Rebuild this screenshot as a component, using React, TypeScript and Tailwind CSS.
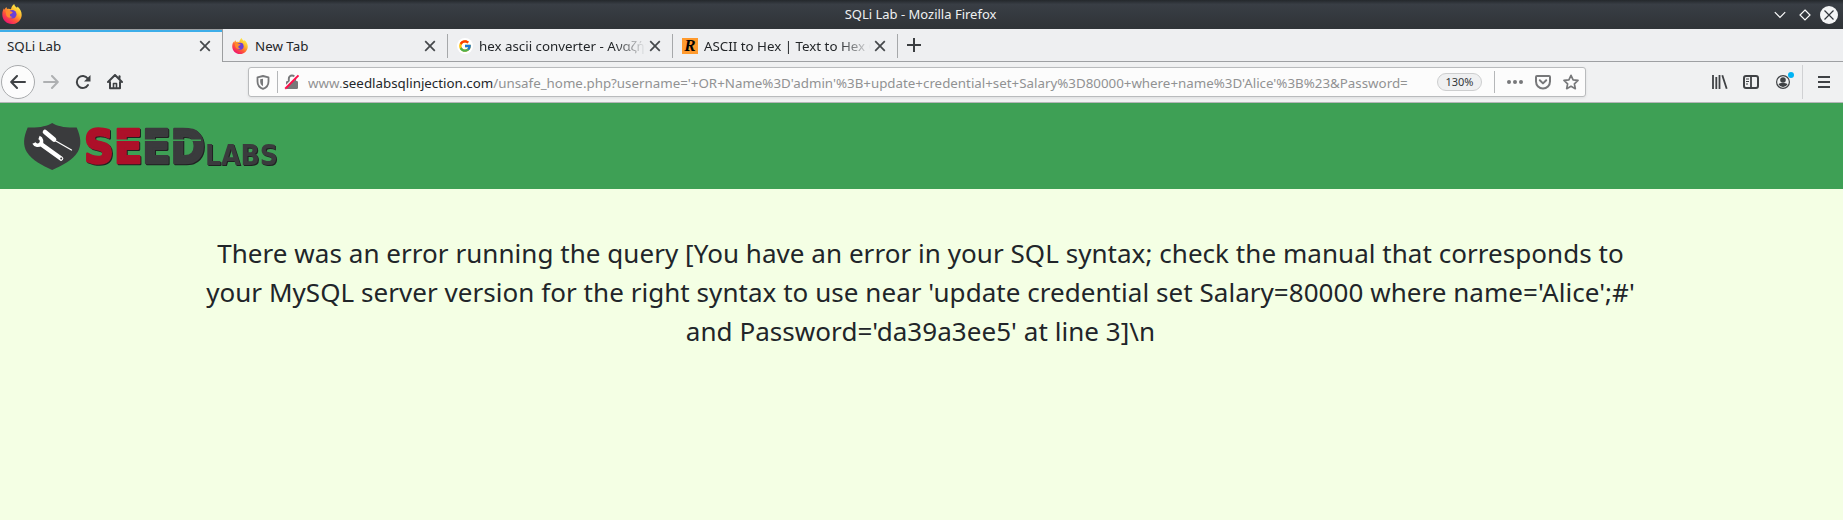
import React from "react";
import { FcGoogle } from "react-icons/fc";

function Firefox({ size, id }: { size: number; id: string }) {
  return (
    <svg width={size} height={size} viewBox="0 0 20 20" className="shrink-0">
      <defs>
        <linearGradient id={id} x1="0.85" y1="0.1" x2="0.25" y2="0.95">
          <stop offset="0" stopColor="#fff34a" />
          <stop offset="0.35" stopColor="#ffb52e" />
          <stop offset="0.65" stopColor="#ff5a36" />
          <stop offset="1" stopColor="#f0156e" />
        </linearGradient>
      </defs>
      <path
        fill={`url(#${id})`}
        d="M12.2 0c.3 2 1.500 2.600 2.800 3.700.5-.5.500-1 .5-1.300 2.400 2 4.300 5 4.200 8.500C19.600 16 15.400 20 10 20S.3 15.900.3 10.500c0-2.600.7-4.600 1.700-6.200.1.600.2 1.100.5 1.500.4-1.300 1.100-2.200 2-2.900 0 .9.300 1.600.8 2 1.500-.3 2.800 0 3.700.4C9.200 3.200 10.600 1.300 12.200 0z"
      />
      <circle cx="10.200" cy="10.300" r="4.300" fill="#6a3fd8" />
      <path fill="#ff8a2c" d="M3.500 7.200c2-1 4.300-.4 6 .3 1.400.6 1.600 1.200.5 1.700-1.600.7-2 .8-2.100 1.900 0 1 1 2 2.700 2-2 1.500-5.200.7-6.300-1.700z" />
    </svg>
  );
}

function CloseX() {
  return (
    <svg width="12" height="12" viewBox="0 0 12 12" className="shrink-0" stroke="#45484b" strokeWidth="1.7" fill="none">
      <path d="M1.200 1.200l9.600 9.600M10.800 1.200L1.200 10.800" />
    </svg>
  );
}

function TitleBar() {
  return (
    <div className="flex h-[29px] shrink-0 items-center bg-linear-to-b from-[#24282c] via-[#393e45] via-15% to-[#2f3337] pr-[5px] pl-[2px]">
      <div className="flex w-[93px] items-center pb-px">
        <Firefox size={20} id="ff-window" />
      </div>
      <div className="flex-1 text-center text-[13px] leading-[29px] text-[#eff0f1]">SQLi Lab - Mozilla Firefox</div>
      <div className="flex w-[92px] items-center justify-end gap-[13px]">
        <svg width="12" height="8" viewBox="0 0 12 8" fill="none" stroke="#fcfcfc" strokeWidth="1.200">
          <path d="M.8 1.200L6 6.400l5.200-5.200" />
        </svg>
        <svg width="12" height="12" viewBox="0 0 12 12" fill="none" stroke="#fcfcfc" strokeWidth="1.200">
          <path d="M6 1l5 5-5 5-5-5z" />
        </svg>
        <svg width="18" height="18" viewBox="0 0 18 18" className="-ml-[4px]">
          <circle cx="9" cy="9" r="9" fill="#f3f4f5" />
          <path d="M4.500 4.500l9 9M13.500 4.500l-9 9" stroke="#31363b" strokeWidth="1.200" />
        </svg>
      </div>
    </div>
  );
}

function TabLabel({ children, fade }: { children: React.ReactNode; fade?: boolean }) {
  return (
    <span
      className={
        fade
          ? "mr-[-3px] min-w-0 flex-1 overflow-hidden whitespace-nowrap mask-r-from-[calc(100%-32px)] mask-r-to-100%"
          : "min-w-0 flex-1 overflow-hidden whitespace-nowrap"
      }
    >
      {children}
    </span>
  );
}

function Divider() {
  return <div className="mt-[5px] h-6 w-px shrink-0 bg-[#a6a8aa]" />;
}

function TabBar() {
  return (
    <div className="flex h-[33px] shrink-0 text-[13.33px] leading-[31px] text-[#232629]">
      <div className="flex w-[223px] shrink-0 items-center border-t border-r border-[#9c9ea0] bg-[#f0f1f2] pr-[11px] pl-[7px] shadow-[inset_0_2px_0_#3daee9]">
        <TabLabel>SQLi Lab</TabLabel>
        <CloseX />
      </div>
      <div className="flex min-w-0 flex-1 border-b border-[#9ea0a3] bg-[#eeeff1]">
        <div className="flex w-[224px] shrink-0 items-center gap-[7px] pt-[2px] pr-[11px] pl-[9px]">
          <Firefox size={16} id="ff-tab" />
          <TabLabel>New Tab</TabLabel>
          <CloseX />
        </div>
        <Divider />
        <div className="flex w-[224px] shrink-0 items-center gap-[6px] pt-[2px] pr-[11px] pl-[9px]">
          <span className="flex size-4 shrink-0 items-center justify-center rounded-full bg-white">
            <FcGoogle size={14} />
          </span>
          <TabLabel fade>hex ascii converter - Αναζήτηση</TabLabel>
          <CloseX />
        </div>
        <Divider />
        <div className="flex w-[224px] shrink-0 items-center gap-[6px] pt-[2px] pr-[11px] pl-[9px]">
          <span className="flex size-4 shrink-0 items-center justify-center bg-[#ff9a2e] font-['Liberation_Serif',serif] text-[17px] leading-4 font-bold text-black italic">
            R
          </span>
          <TabLabel fade>ASCII to Hex | Text to Hex Converter</TabLabel>
          <CloseX />
        </div>
        <Divider />
        <svg width="14" height="14" viewBox="0 0 14 14" className="mt-[9px] ml-[9px]" stroke="#3b3e41" strokeWidth="2">
          <path d="M7 0v14M0 7h14" />
        </svg>
      </div>
    </div>
  );
}

function UrlBar() {
  return (
    <div className="flex h-[30px] w-[1338px] shrink-0 items-center rounded-[3px] border border-[#b9bbbd] bg-[#fcfcfc] shadow-[0_1px_3px_rgba(0,0,0,0.08)]">
      <svg width="14" height="15" viewBox="0 0 14 15" className="ml-[7px] shrink-0" fill="none">
        <path d="M7 1L12.500 2.300v4.200C12.500 10 10.500 12.600 7 13.900 3.500 12.600 1.500 10 1.500 6.500V2.300z" stroke="#77787a" strokeWidth="1.800" strokeLinejoin="round" />
        <path d="M7 3.800v7.400C5 10 4.200 8.600 4.200 6.500V4.300z" fill="#77787a" />
      </svg>
      <div className="ml-[7px] h-[22px] w-px bg-[#b5b7b9]" />
      <svg width="16" height="16" viewBox="0 0 16 16" className="ml-[6px] shrink-0" fill="none">
        <rect x="2" y="7" width="12" height="8" rx="1.200" fill="#77787a" />
        <path d="M4.800 7V4.700a3.200 3.200 0 016.400 0V7" stroke="#77787a" strokeWidth="1.900" />
        <path d="M.8 13.500L13.200 1" stroke="#fcfcfc" strokeWidth="2" />
        <path d="M1.200 14.800L14.500 1.400" stroke="#ff0f4b" strokeWidth="2" />
      </svg>
      <div className="ml-[8px] w-[1114px] overflow-hidden pt-[2px] text-[13.33px] leading-[26px] whitespace-nowrap text-[#919293]">
        www.<span className="text-[#232629]">seedlabsqlinjection.com</span>
        {"/unsafe_home.php?username='+OR+Name%3D'admin'%3B+update+credential+set+Salary%3D80000+where+name%3D'Alice'%3B%23&Password="}
      </div>
      <div className="ml-auto flex h-[18px] w-[45px] items-center justify-center rounded-full border border-[#cdcecf] bg-[#eff0f1] text-[11px] text-[#33373a]">130%</div>
      <div className="ml-[12px] h-[22px] w-px bg-[#b5b7b9]" />
      <svg width="16" height="4" viewBox="0 0 16 4" className="ml-[12px]" fill="#77787a">
        <circle cx="2" cy="2" r="2" />
        <circle cx="8" cy="2" r="2" />
        <circle cx="14" cy="2" r="2" />
      </svg>
      <svg width="16" height="16" viewBox="0 0 16 16" className="ml-[12px]" fill="none" stroke="#77787a" strokeWidth="2">
        <path d="M2 2h12a1 1 0 011 1v4.500a7 7 0 01-14 0V3a1 1 0 011-1z" />
        <path d="M4.800 6.300L8 9.400l3.200-3.100" strokeLinecap="round" strokeLinejoin="round" />
      </svg>
      <svg width="16" height="16" viewBox="0 0 16 16" className="mr-[6px] ml-[12px]" fill="none" stroke="#77787a" strokeWidth="1.700" strokeLinejoin="round">
        <path d="M8 1.300l2.100 4.500 4.900.6-3.600 3.400.9 4.900L8 12.300l-4.300 2.400.9-4.900L1 6.400l4.900-.6z" />
      </svg>
    </div>
  );
}

function Toolbar() {
  return (
    <div className="flex h-[41px] shrink-0 items-center border-b border-[#b4b6b8] bg-[#f0f1f2] pr-[13px] pl-px">
      <div className="flex size-[34px] items-center justify-center rounded-full border border-[#a9abad] bg-[#fcfcfc]">
        <svg width="16" height="14" viewBox="0 0 16 14" fill="none" stroke="#3f4245" strokeWidth="2" strokeLinecap="round" strokeLinejoin="round">
          <path d="M15 7H1.500M7 1L1.200 7 7 13" />
        </svg>
      </div>
      <svg width="16" height="14" viewBox="0 0 16 14" className="ml-[8px]" fill="none" stroke="#aeb0b2" strokeWidth="2" strokeLinecap="round" strokeLinejoin="round">
        <path d="M1 7h13.500M9 1l5.800 6L9 13" />
      </svg>
      <svg width="16" height="16" viewBox="0 0 16 16" className="ml-[16px]" fill="none" stroke="#3f4245" strokeWidth="2">
        <path d="M12.700 4.500A6 6 0 1013 11" strokeLinecap="round" />
        <path d="M15.500 1v6.500H9z" fill="#3f4245" stroke="none" />
      </svg>
      <svg width="16" height="16" viewBox="0 0 16 16" className="ml-[16px]" fill="none" stroke="#3f4245" strokeWidth="2" strokeLinejoin="round" strokeLinecap="round">
        <path d="M1 8l7-7 7 7M3 8v6.200h10V8" />
        <path d="M6.500 14V9.500h3V14" strokeWidth="1.600" />
        <path d="M12.500 2.200v2" />
      </svg>
      <div className="ml-[125px]">
        <UrlBar />
      </div>
      <svg width="16" height="16" viewBox="0 0 16 16" className="ml-[126px]" fill="none" stroke="#3f4245" strokeWidth="1.800">
        <path d="M1 1v14M4.300 3v12M7.500 1v14M10.300 1.200l4.400 13.600" />
      </svg>
      <svg width="16" height="14" viewBox="0 0 16 14" className="ml-[15px]" fill="none" stroke="#3f4245">
        <rect x="1" y="1" width="14" height="12" rx="2" strokeWidth="2" />
        <path d="M8 1v12" strokeWidth="1.800" />
        <path d="M3 4h3M3 6.500h3M3 9h2" strokeWidth="1" />
      </svg>
      <svg width="20" height="20" viewBox="0 0 20 20" className="-mt-[4px] ml-[16px]">
        <circle cx="8" cy="12" r="6.400" fill="none" stroke="#3f4245" strokeWidth="1.200" />
        <circle cx="8" cy="10" r="2.800" fill="#3f4245" />
        <path d="M3.500 14.300c1.500-1.500 2.500-1.300 4.500-1.300s3 0 4.500 1.300A5 5 0 018 17a5 5 0 01-4.500-2.700z" fill="#3f4245" />
        <circle cx="16" cy="5" r="3" fill="#00b3f4" />
      </svg>
      <div className="ml-auto flex items-center">
        <div className="h-[34px] w-px bg-[#d0d1d3]" />
        <svg width="12" height="12" viewBox="0 0 12 12" className="ml-[15px]" stroke="#3f4245" strokeWidth="2">
          <path d="M0 1h12M0 6h12M0 11h12" />
        </svg>
      </div>
    </div>
  );
}

function SeedLogo() {
  return (
    <svg width="262" height="52" viewBox="0 0 262 52" className="overflow-visible font-['DejaVu_Sans',sans-serif] font-bold">
      <path d="M29.200 1c5 3.200 13 5 24.500 4.500 4.500 10 4.800 18 1 24.500C49.500 38.500 39 43.500 29.200 48 19.500 43.500 9 38.500 3.800 30 0 23.500.2 15.500 4.700 5.500 16 6 24 4.200 29.200 1z" fill="#3a3b3d" />
      <g stroke="#fff" fill="none" strokeLinecap="round">
        <path d="M18.500 22.500L38 36.500" strokeWidth="4.600" />
        <path d="M16 15.500a4 4 0 11-5 5.500" strokeWidth="3.600" strokeLinecap="butt" />
        <path d="M22 10l9 7.500" strokeWidth="4.600" />
        <path d="M31 18l17.500 10" strokeWidth="1.300" />
      </g>
      <circle cx="38.200" cy="36.600" r="1" fill="#3a3b3d" />
      <g className="drop-shadow-[1px_1px_0_#202122]">
        <text
          x="61"
          y="41"
          fontSize="46"
          textLength="121"
          lengthAdjust="spacingAndGlyphs"
          strokeWidth="2.600"
          strokeLinejoin="round"
          fill="#ad1029"
          stroke="#ad1029"
        >
          SE
          <tspan fill="#3a3b3d" stroke="#3a3b3d">
            ED
          </tspan>
        </text>
        <text x="182" y="42.500" fontSize="29" textLength="73" lengthAdjust="spacingAndGlyphs" fill="#3a3b3d">
          LABS
        </text>
      </g>
      <path d="M92 18.200h86" stroke="#3ea055" strokeWidth="1.500" />
    </svg>
  );
}

export default function App() {
  return (
    <div className="flex h-[520px] w-[1843px] flex-col overflow-hidden bg-[#f4ffe4] font-['Noto_Sans',sans-serif]">
      <TitleBar />
      <TabBar />
      <Toolbar />
      <header className="flex h-[86px] shrink-0 items-start bg-[#3ea055] pt-[19px] pl-[23px]">
        <SeedLogo />
      </header>
      <main className="pt-[45px] pr-[201px] pl-[199px] text-center text-[26px] leading-[39px] tracking-[0.046px] text-[#212529]">
        <p>
          There was an error running the query [You have an error in your SQL syntax; check the manual that corresponds to
          <br />
          your MySQL server version for the right syntax to use near 'update credential set Salary=80000 where name='Alice';#'
          <br />
          and Password='da39a3ee5' at line 3]\n
        </p>
      </main>
    </div>
  );
}
